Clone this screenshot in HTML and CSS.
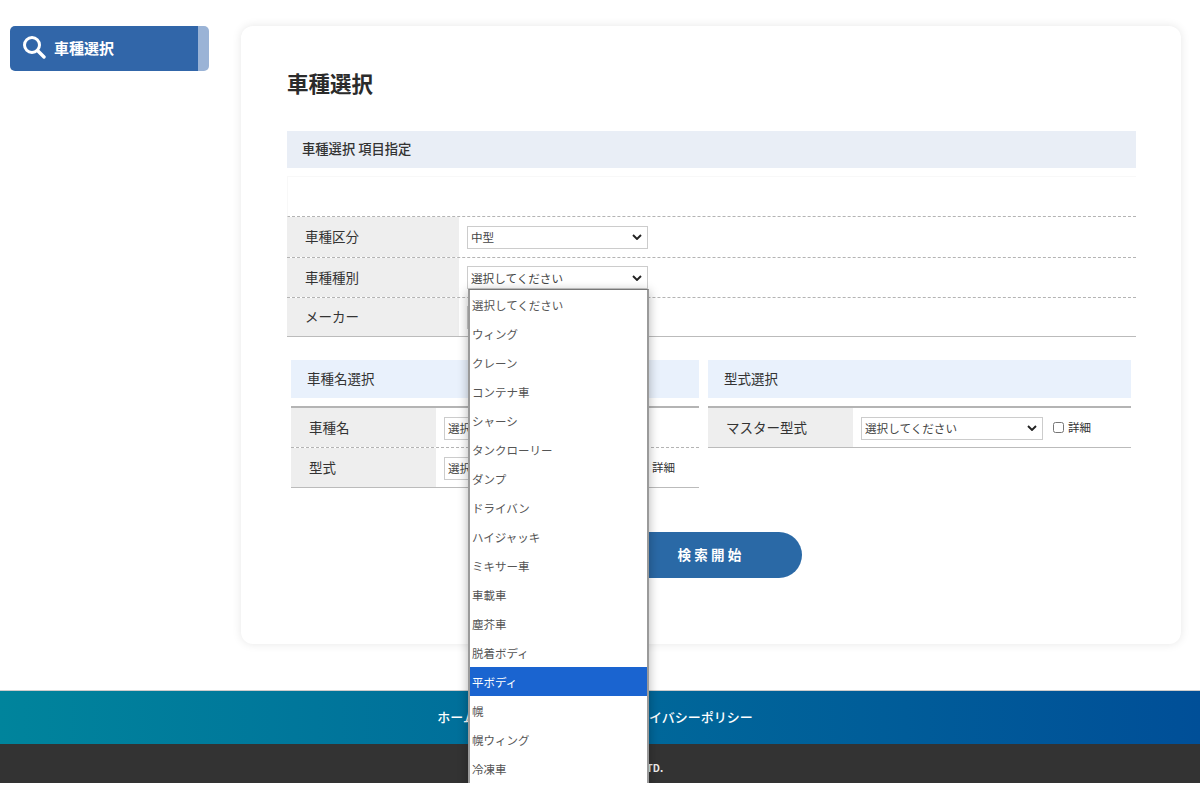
FILE: index.html

```html
<!DOCTYPE html>
<html lang="ja">
<head>
<meta charset="UTF-8">
<title>車種選択</title>
<link rel="stylesheet" href="styles.css">
</head>
<body>
<div class="page">
    <div class="wrap">
        <aside class="side">
            <a class="side-btn">
                <svg class="side-icon" viewBox="0 0 24 24" width="24" height="24"><circle cx="10" cy="10" r="7.5" fill="none" stroke="#fff" stroke-width="3"/><path d="M15.5 15.5L22 22" fill="none" stroke="#fff" stroke-width="3.4" stroke-linecap="round"/></svg>
                <span>車種選択</span>
            </a>
        </aside>
        <main class="card">
            <h1 class="title">車種選択</h1>
            <h2 class="bar">車種選択 項目指定</h2>
            <div class="blank"></div>
            <div class="rows">
                <div class="row first">
                    <div class="label">車種区分</div>
                    <div class="cell"><select class="sel w180"><option>中型</option></select></div>
                </div>
                <div class="row">
                    <div class="label">車種種別</div>
                    <div class="cell"><select class="sel w180"><option>選択してください</option></select></div>
                </div>
                <div class="row">
                    <div class="label">メーカー</div>
                    <div class="cell"><select class="sel w180"><option>選択してください</option></select></div>
                </div>
            </div>
            <div class="panels">
                <section class="panel panel-left">
                    <h3 class="panel-head">車種名選択</h3>
                    <div class="panel-rows">
                        <div class="row">
                            <div class="label small">車種名</div>
                            <div class="cell"><select class="sel w180"><option>選択してください</option></select></div>
                        </div>
                        <div class="row">
                            <div class="label small">型式</div>
                            <div class="cell"><select class="sel w183"><option>選択してください</option></select>
                                <label class="check"><input type="checkbox"> 詳細</label></div>
                        </div>
                    </div>
                </section>
                <section class="panel panel-right">
                    <h3 class="panel-head">型式選択</h3>
                    <div class="panel-rows">
                        <div class="row">
                            <div class="label small">マスター型式</div>
                            <div class="cell"><select class="sel w182"><option>選択してください</option></select>
                                <label class="check"><input type="checkbox"> 詳細</label></div>
                        </div>
                    </div>
                </section>
            </div>
            <div class="actions"><button class="search">検索開始</button></div>
        </main>
    </div>
    <footer class="foot">
        <nav class="foot-nav"><a>ホーム</a><a>ご利用規約</a><a>プライバシーポリシー</a></nav>
        <div class="foot-copy">© TRUCK SEARCH CO.,LTD.</div>
    </footer>
    <ul class="popup">
        <li>選択してください</li>
        <li>ウィング</li>
        <li>クレーン</li>
        <li>コンテナ車</li>
        <li>シャーシ</li>
        <li>タンクローリー</li>
        <li>ダンプ</li>
        <li>ドライバン</li>
        <li>ハイジャッキ</li>
        <li>ミキサー車</li>
        <li>車載車</li>
        <li>塵芥車</li>
        <li>脱着ボディ</li>
        <li class="on">平ボディ</li>
        <li>幌</li>
        <li>幌ウィング</li>
        <li>冷凍車</li>
    </ul>
</div>
</body>
</html>
```

FILE: styles.css

```css
* {
    margin: 0;
    padding: 0;
    box-sizing: border-box;
}

body {
    background: #fff;
    color: #333;
    font-family: "Noto Sans CJK JP", "Noto Sans", sans-serif;
    font-size: 14px;
}

.page {
    position: relative;
    height: 783px;
    overflow: hidden;
}

.wrap {
    display: flex;
    align-items: flex-start;
    padding: 26px 19px 0 10px;
}

/* Sidebar */
.side {
    width: 199px;
    margin-right: 32px;
}

.side-btn {
    display: flex;
    align-items: center;
    height: 45px;
    padding: 0 0 3px 12px;
    background: #3166a9;
    border-right: 11px solid #9ab3d6;
    border-radius: 5px;
    color: #fff;
    font-size: 15px;
    font-weight: 700;
}

.side-icon {
    margin: 0 8px 0 0;
}

/* Card */
.card {
    flex: 1;
    height: 618px;
    padding: 41px 45px 0 46px;
    background: #fff;
    border-radius: 12px;
    box-shadow: 0 0 10px rgba(0, 0, 0, .1);
}

.title {
    height: 34px;
    font-size: 21.5px;
    font-weight: 700;
    line-height: 32px;
    color: #2b2b2b;
}

.bar {
    height: 37px;
    margin-top: 30px;
    padding: 0 0 2px 15px;
    background: #e9eef6;
    font-size: 13.3px;
    font-weight: 500;
    line-height: 35px;
}

.blank {
    height: 41px;
    margin-top: 8px;
    border-top: 1px solid #f8f8f8;
    border-left: 1px solid #f8f8f8;
    border-bottom: 1px dashed #b4b4b4;
}

.row {
    display: flex;
    height: 40px;
    border-bottom: 1px dashed #b4b4b4;
}

.row.first {
    height: 41px;
}

.rows .row:last-child {
    height: 39px;
    border-bottom: 1px solid #bbb;
}

.panel-rows .row:last-child {
    border-bottom: 1px solid #bbb;
}

.label {
    display: flex;
    align-items: center;
    width: 172px;
    padding: 0 0 2px 18px;
    background: #eee;
    font-size: 13.5px;
}

.label.small {
    width: 145px;
}

.cell {
    display: flex;
    flex: 1;
    align-items: center;
    padding-left: 8px;
}

.panel-rows .cell {
    padding-top: 1px;
}

.sel {
    height: 23px;
    padding-left: 3px;
    background: #fff url("data:image/svg+xml,%3Csvg xmlns='http://www.w3.org/2000/svg' width='10' height='6'%3E%3Cpath d='M1 1l4 4 4-4' fill='none' stroke='%23222' stroke-width='1.9'/%3E%3C/svg%3E") no-repeat right 5px center;
    border: 1px solid #ccc;
    color: #444;
    font-family: inherit;
    font-size: 11.6px;
    appearance: none;
}

.w180 {
    width: 181px;
}

.w182 {
    width: 182px;
}

.w183 {
    width: 183px;
}

.check {
    display: flex;
    align-items: center;
    margin: 0 0 3px 10px;
    font-size: 11.5px;
}

.check input {
    width: 11px;
    height: 11px;
    margin: 1px 4px 0 0;
}

/* Two panels */
.panels {
    display: flex;
    margin: 23px 5px 0 4px;
}

.panel-left {
    width: 408px;
    margin-right: 9px;
}

.panel-right {
    flex: 1;
}

.panel-head {
    height: 38px;
    padding-left: 16px;
    background: #e9f1fc;
    font-size: 13.5px;
    font-weight: 400;
    line-height: 37px;
}

.panel-rows {
    margin-top: 8px;
    border-top: 2px solid #b4b4b4;
}

.actions {
    display: flex;
    justify-content: center;
    margin-top: 44px;
    padding-right: 1px;
}

.search {
    width: 182px;
    height: 46px;
    padding-bottom: 2px;
    background: #2a69a6;
    border: 0;
    border-radius: 23px;
    color: #fff;
    font-family: inherit;
    font-size: 13.5px;
    font-weight: 700;
    letter-spacing: 3.3px;
}

/* Footer */
.foot {
    margin-top: 46px;
    border-top: 1px solid #ccc;
}

.foot-nav {
    display: flex;
    justify-content: center;
    gap: 41px;
    height: 53px;
    padding-right: 10px;
    background: linear-gradient(90deg, #00849c, #004f98);
    color: #fff;
    font-size: 13px;
    font-weight: 500;
    line-height: 52px;
}

.foot-copy {
    height: 60px;
    padding: 16px 4px 0 0;
    background: #333;
    color: #eee;
    font-size: 10px;
    font-weight: 700;
    text-align: center;
}

/* Open select list */
.popup {
    position: absolute;
    top: 289px;
    left: 468px;
    width: 181px;
    height: 520px;
    background: #fff;
    border: 2px solid #9a9a9a;
    border-width: 1px 2px;
    border-top-color: #777;
    box-shadow: 0 2px 10px rgba(0, 0, 0, .3);
    list-style: none;
}

.popup li {
    height: 29px;
    padding-left: 2px;
    color: #555;
    font-size: 11.5px;
    line-height: 30px;
}

.popup li.on {
    background: #1a64d0;
    color: #fff;
}
```
